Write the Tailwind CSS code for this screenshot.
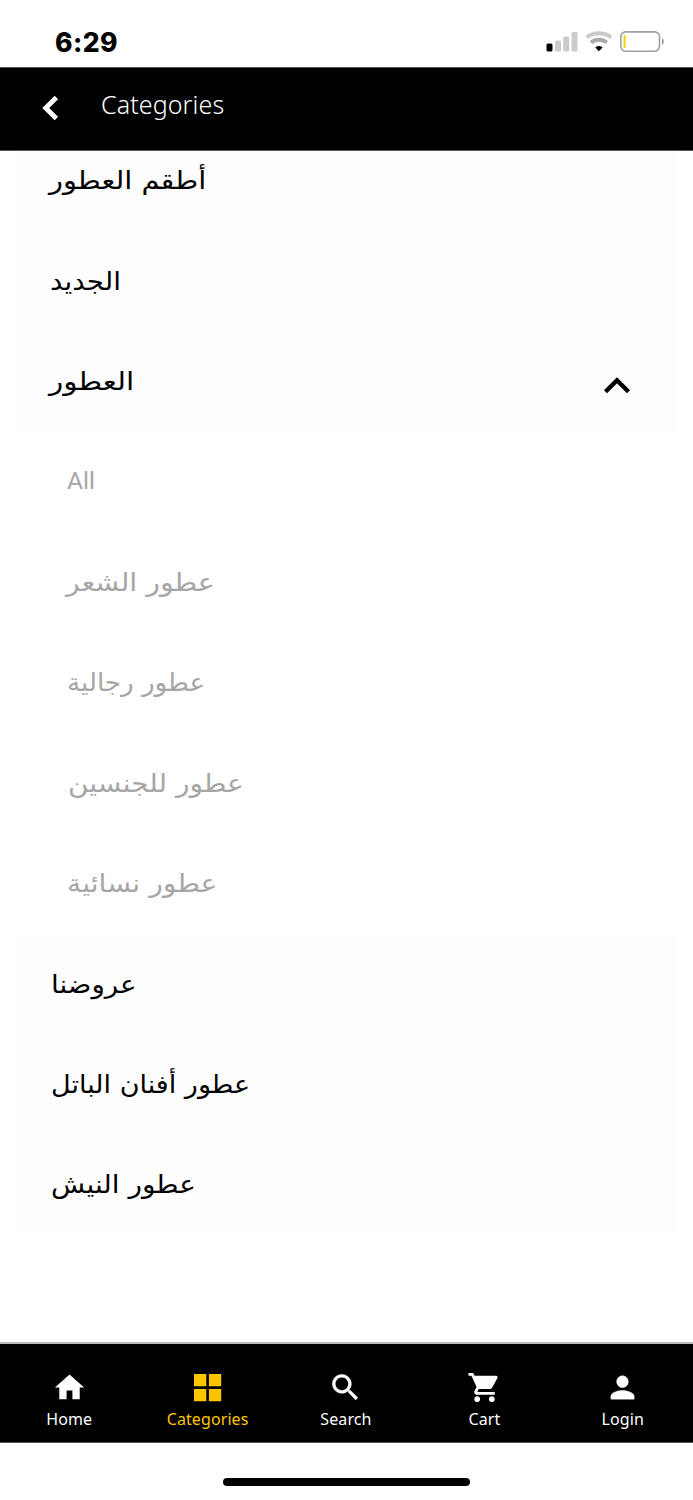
<!DOCTYPE html>
<html lang="en">

<head>
  <meta charset="UTF-8" />
  <meta name="viewport" content="width=device-width, initial-scale=1.0" />
  <script src="https://cdn.jsdelivr.net/npm/@tailwindcss/browser@4"></script>
  <title>Categories</title>
</head>

<body class="bg-white font-['Noto_Sans','DejaVu_Sans',sans-serif]">
  <div class="flex flex-col w-[693px] h-[1500px] overflow-hidden">
    <!-- status bar -->
    <div class="h-[67px] shrink-0 flex items-start justify-between pl-[55px] pr-[28px]">
      <span class="mt-[24px] text-[26.5px] leading-9 font-extrabold tracking-[0.4px] font-[Inter,sans-serif]">6:29</span>
      <svg class="mt-[30px]" width="119" height="24" viewBox="0 0 119 24">
        <rect x="0.5" y="13.5" width="6" height="8" rx="1.5" fill="#000" />
        <g fill="#cbcbcb">
          <rect x="9" y="10.5" width="6" height="11" rx="1.5" />
          <rect x="17.2" y="6.5" width="6" height="15" rx="1.5" />
          <rect x="25.5" y="2" width="6" height="19.5" rx="1.5" />
        </g>
        <path d="M40.700 7.500C47.500 1.900 58.300 1.900 65.100 7.500" fill="none" stroke="#cbcbcb" stroke-width="4" />
        <path d="M45 12.600c4.500-3.900 11.300-3.900 15.800 0" fill="none" stroke="#a9a9a9" stroke-width="4" />
        <path d="M49.300 17.400c2-2 5.200-2 7.200 0L52.900 21.300z" fill="#000" />
        <rect x="74.800" y="1.900" width="38.700" height="19.400" rx="5" fill="#fff" stroke="#a0a0a0" stroke-width="1.600" />
        <rect x="77.500" y="5" width="2.200" height="13" rx="1" fill="#fbd11c" />
        <path d="M116 8.300c2.400 1 2.400 5.700 0 6.700z" fill="#999" />
      </svg>
    </div>

    <!-- header -->
    <header class="h-[84px] shrink-0 flex items-center bg-black border-y border-[#555] text-white pl-[42px]">
      <svg class="-mt-[2px]" width="18" height="26" viewBox="0 0 18 26" fill="none" stroke="currentColor" stroke-width="4.8">
        <path d="M14.400 2.500L3.700 13l10.700 10.500" />
      </svg>
      <h1 class="ml-[41px] -mt-[10px] text-[25px] leading-9 font-light tracking-[0.1px]">Categories</h1>
    </header>

    <!-- category list, scrolled a little under the header -->
    <main class="flex-1 overflow-hidden">
      <ul class="-mt-[20px] mx-[17px] text-[25px] text-black font-['DejaVu_Sans',sans-serif]">
        <li class="h-[100.4px] bg-[#fefefe] flex items-center pl-[32px]"><span class="origin-left scale-x-[1.154]">أطقم العطور</span></li>
        <li class="h-[100.4px] bg-[#fefefe] flex items-center pl-[33px]"><span class="origin-left scale-x-[1.11]">الجديد</span></li>
        <li class="h-[100.4px] bg-[#fefefe] flex items-center justify-between pl-[32px] pr-[45px]">
          <span class="origin-left scale-x-[1.18]">العطور</span>
          <svg class="mt-[6px]" width="28" height="18" viewBox="0 0 28 18" fill="none" stroke="#000" stroke-width="4.4">
            <path d="M2.500 15.800L14 4.300l11.500 11.500" />
          </svg>
        </li>
        <li>
          <ul class="text-[#a6a6a6]">
            <li class="h-[100.4px] flex items-center pl-[50px] text-[24.5px] font-[Roboto,sans-serif]"><span class="-mt-[1px]">All</span></li>
            <li class="h-[100.4px] flex items-center pl-[49px]"><span class="origin-left scale-x-[1.135]">عطور الشعر</span></li>
            <li class="h-[100.4px] flex items-center pl-[50px]"><span class="origin-left scale-x-[1.046]">عطور رجالية</span></li>
            <li class="h-[100.4px] flex items-center pl-[51px]"><span class="origin-left scale-x-[1.12]">عطور للجنسين</span></li>
            <li class="h-[100.4px] flex items-center pl-[50px]"><span class="origin-left scale-x-[1.13]">عطور نسائية</span></li>
          </ul>
        </li>
        <li class="h-[100.4px] bg-[#fefefe] flex items-center pl-[34px]"><span class="origin-left scale-x-[1.11]">عروضنا</span></li>
        <li class="h-[100.4px] bg-[#fefefe] flex items-center pl-[34px]"><span class="origin-left scale-x-[1.08]">عطور أفنان الباتل</span></li>
        <li class="h-[100.4px] bg-[#fefefe] flex items-center pl-[34px]"><span class="origin-left scale-x-[1.115]">عطور النيش</span></li>
      </ul>
    </main>

    <!-- bottom tabs -->
    <nav class="h-[101px] shrink-0 grid grid-cols-5 pr-px bg-black border-t-2 border-t-[#bbb] border-b border-b-[#555] text-white text-[16px] tracking-[0.1px]">
      <a class="flex flex-col items-center pt-[26px]">
        <svg width="35" height="35" viewBox="0 0 24 24" fill="currentColor"><path d="M10 20v-6h4v6h5v-8h3L12 3 2 12h3v8z" /></svg>
        <span class="leading-[24px] mt-[2px]">Home</span>
      </a>
      <a class="flex flex-col items-center pt-[26px] text-[#fdc500]">
        <svg width="35" height="35" viewBox="0 0 35 35" fill="currentColor"><path d="M4 4h12.300v12.300H4zM18.900 4h12.300v12.300H18.900zM4 18.900h12.300v12.300H4zM18.900 18.900h12.300v12.300H18.900z" /></svg>
        <span class="leading-[24px] mt-[2px]">Categories</span>
      </a>
      <a class="flex flex-col items-center pt-[26px]">
        <svg width="35" height="35" viewBox="0 0 24 24" fill="currentColor" stroke="currentColor" stroke-width="0.3"><path d="M15.500 14h-.79l-.28-.27C15.410 12.590 16 11.110 16 9.500 16 5.910 13.090 3 9.500 3S3 5.910 3 9.500 5.910 16 9.500 16c1.610 0 3.090-.59 4.230-1.570l.27.28v.79l5 4.990L20.490 19l-4.990-5zm-6 0C7.010 14 5 11.990 5 9.500S7.010 5 9.500 5 14 7.010 14 9.500 11.990 14 9.500 14z" /></svg>
        <span class="leading-[24px] mt-[2px]">Search</span>
      </a>
      <a class="flex flex-col items-center pt-[26px]">
        <svg width="35" height="35" viewBox="0 0 24 24" fill="currentColor"><path d="M7 18c-1.100 0-1.990.9-1.990 2S5.900 22 7 22s2-.9 2-2-.9-2-2-2zM1 2v2h2l3.600 7.590-1.350 2.450c-.16.28-.25.61-.25.96 0 1.100.9 2 2 2h12v-2H7.420c-.14 0-.25-.11-.25-.25l.03-.12.9-1.630h7.450c.75 0 1.410-.41 1.750-1.030l3.580-6.490A1.003 1.003 0 0 0 20 4H5.210l-.94-2H1zm16 16c-1.100 0-1.990.9-1.990 2s.89 2 1.990 2 2-.9 2-2-.9-2-2-2z" /></svg>
        <span class="leading-[24px] mt-[2px]">Cart</span>
      </a>
      <a class="flex flex-col items-center pt-[26px]">
        <svg width="35" height="35" viewBox="0 0 24 24" fill="currentColor" stroke="currentColor" stroke-width="0.3"><path d="M12 12c2.210 0 4-1.790 4-4s-1.790-4-4-4-4 1.790-4 4 1.790 4 4 4zm0 2c-2.670 0-8 1.340-8 4v2h16v-2c0-2.660-5.330-4-8-4z" /></svg>
        <span class="leading-[24px] mt-[2px]">Login</span>
      </a>
    </nav>

    <!-- home indicator -->
    <div class="h-[57px] shrink-0 flex justify-center pt-[35px]">
      <div class="w-[247px] h-[8px] rounded-full bg-black"></div>
    </div>
  </div>
</body>

</html>
